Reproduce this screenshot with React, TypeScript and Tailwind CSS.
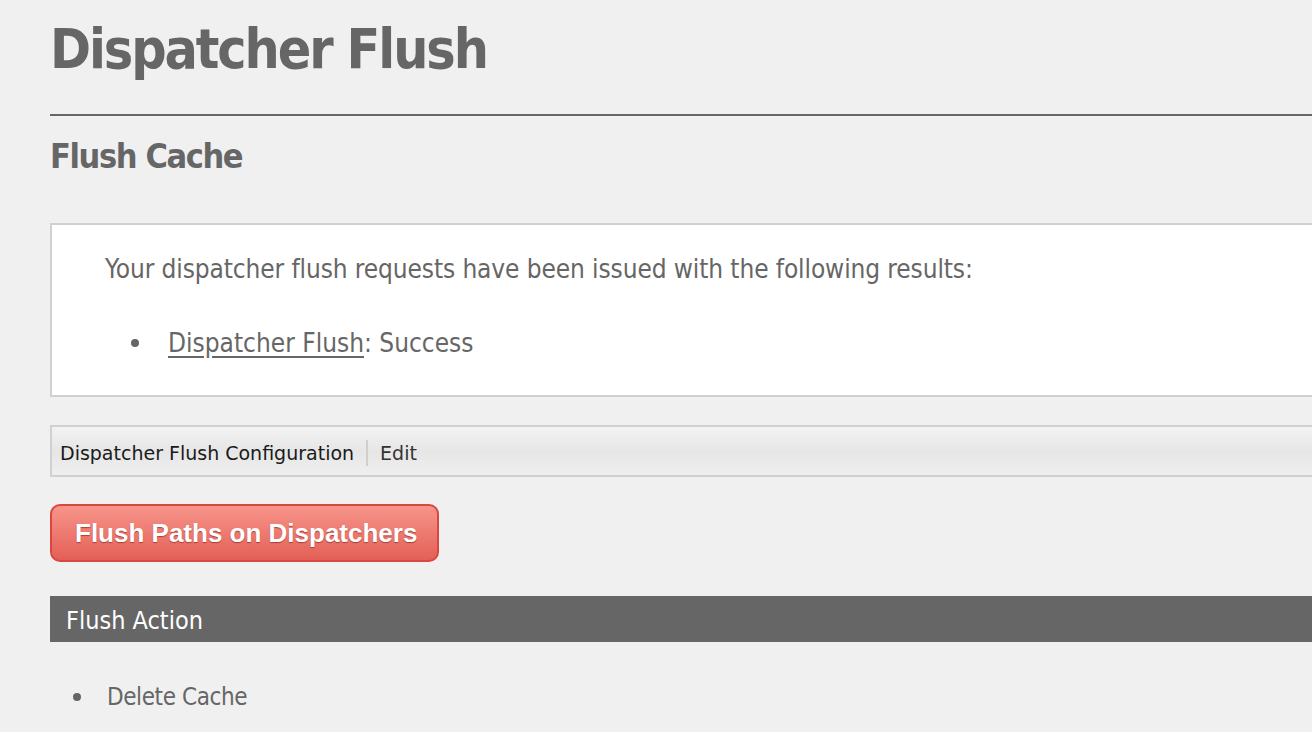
import React from "react";

const tahoma = { fontFamily: '"DejaVu Sans Condensed", "DejaVu Sans", sans-serif' };

function Bullet({ children, dotLeft, gap }: { children: React.ReactNode; dotLeft: string; gap: string }) {
    return (
        <div className={`flex items-center ${dotLeft}`}>
            <span className={`block w-[8px] h-[8px] rounded-full bg-[#666] ${gap}`} />
            {children}
        </div>
    );
}

export default function App() {
    return (
        <div className="w-full h-[732px] overflow-hidden bg-[#f0f0f0] text-[#666]" style={tahoma}>
            <div className="pl-[50px] w-[1340px]">
                {/* Page title */}
                <h1 className="pt-[17px] text-[55px] leading-[64px] font-bold tracking-[-2.1px]">Dispatcher Flush</h1>
                <div className="mt-[33px] h-[2px] bg-[#666]" />

                <h2 className="mt-[20px] text-[34px] leading-[40px] font-bold tracking-[-1.4px]">Flush Cache</h2>

                {/* Result box */}
                <div className="mt-[47px] h-[174px] border-2 border-[#d0d0d0] bg-white pt-[29px] text-[26px] leading-[30px]">
                    <p className="pl-[53px] tracking-[-0.1px]">Your dispatcher flush requests have been issued with the following results:</p>
                    <div className="mt-[44px]">
                        <Bullet dotLeft="pl-[79px]" gap="mr-[29px]">
                            <span>
                                <a href="#" className="underline underline-offset-[4px]">Dispatcher Flush</a>: Success
                            </span>
                        </Bullet>
                    </div>
                </div>

                {/* Toolbar */}
                <div className="mt-[28px] h-[52px] border-2 border-[#d0d0d0] bg-gradient-to-b from-[#f2f2f2] via-[#e6e6e6] to-[#efefef] flex items-center pl-[8px] pt-[4px] text-[19px]" style={{ fontFamily: '"DejaVu Sans", sans-serif' }}>
                    <span className="text-[#1a1a1a]">Dispatcher Flush Configuration</span>
                    <span className="mx-[12px] w-[2px] h-[26px] bg-[#cfcfcf]" />
                    <span className="text-[#333]">Edit</span>
                </div>

                {/* Action button */}
                <button
                    className="mt-[27px] w-[389px] h-[58px] rounded-[10px] border-2 border-[#d9483f] bg-gradient-to-b from-[#f7948a] to-[#e35f57] text-white text-[26px] font-bold text-left pl-[23px] whitespace-nowrap [text-shadow:0_1px_1px_rgba(120,30,20,0.6)] block"
                    style={{ fontFamily: '"Liberation Sans", Arial, sans-serif' }}
                >
                    Flush Paths on Dispatchers
                </button>

                <div className="mt-[34px] h-[46px] bg-[#666] text-white text-[25px] flex items-center pl-[16px] pt-[4px]">Flush Action</div>

                <div className="mt-[41px] text-[24px] leading-[28px] tracking-[-0.4px]">
                    <Bullet dotLeft="pl-[23px]" gap="mr-[26px]">
                        <span>Delete Cache</span>
                    </Bullet>
                </div>
            </div>
        </div>
    );
}
